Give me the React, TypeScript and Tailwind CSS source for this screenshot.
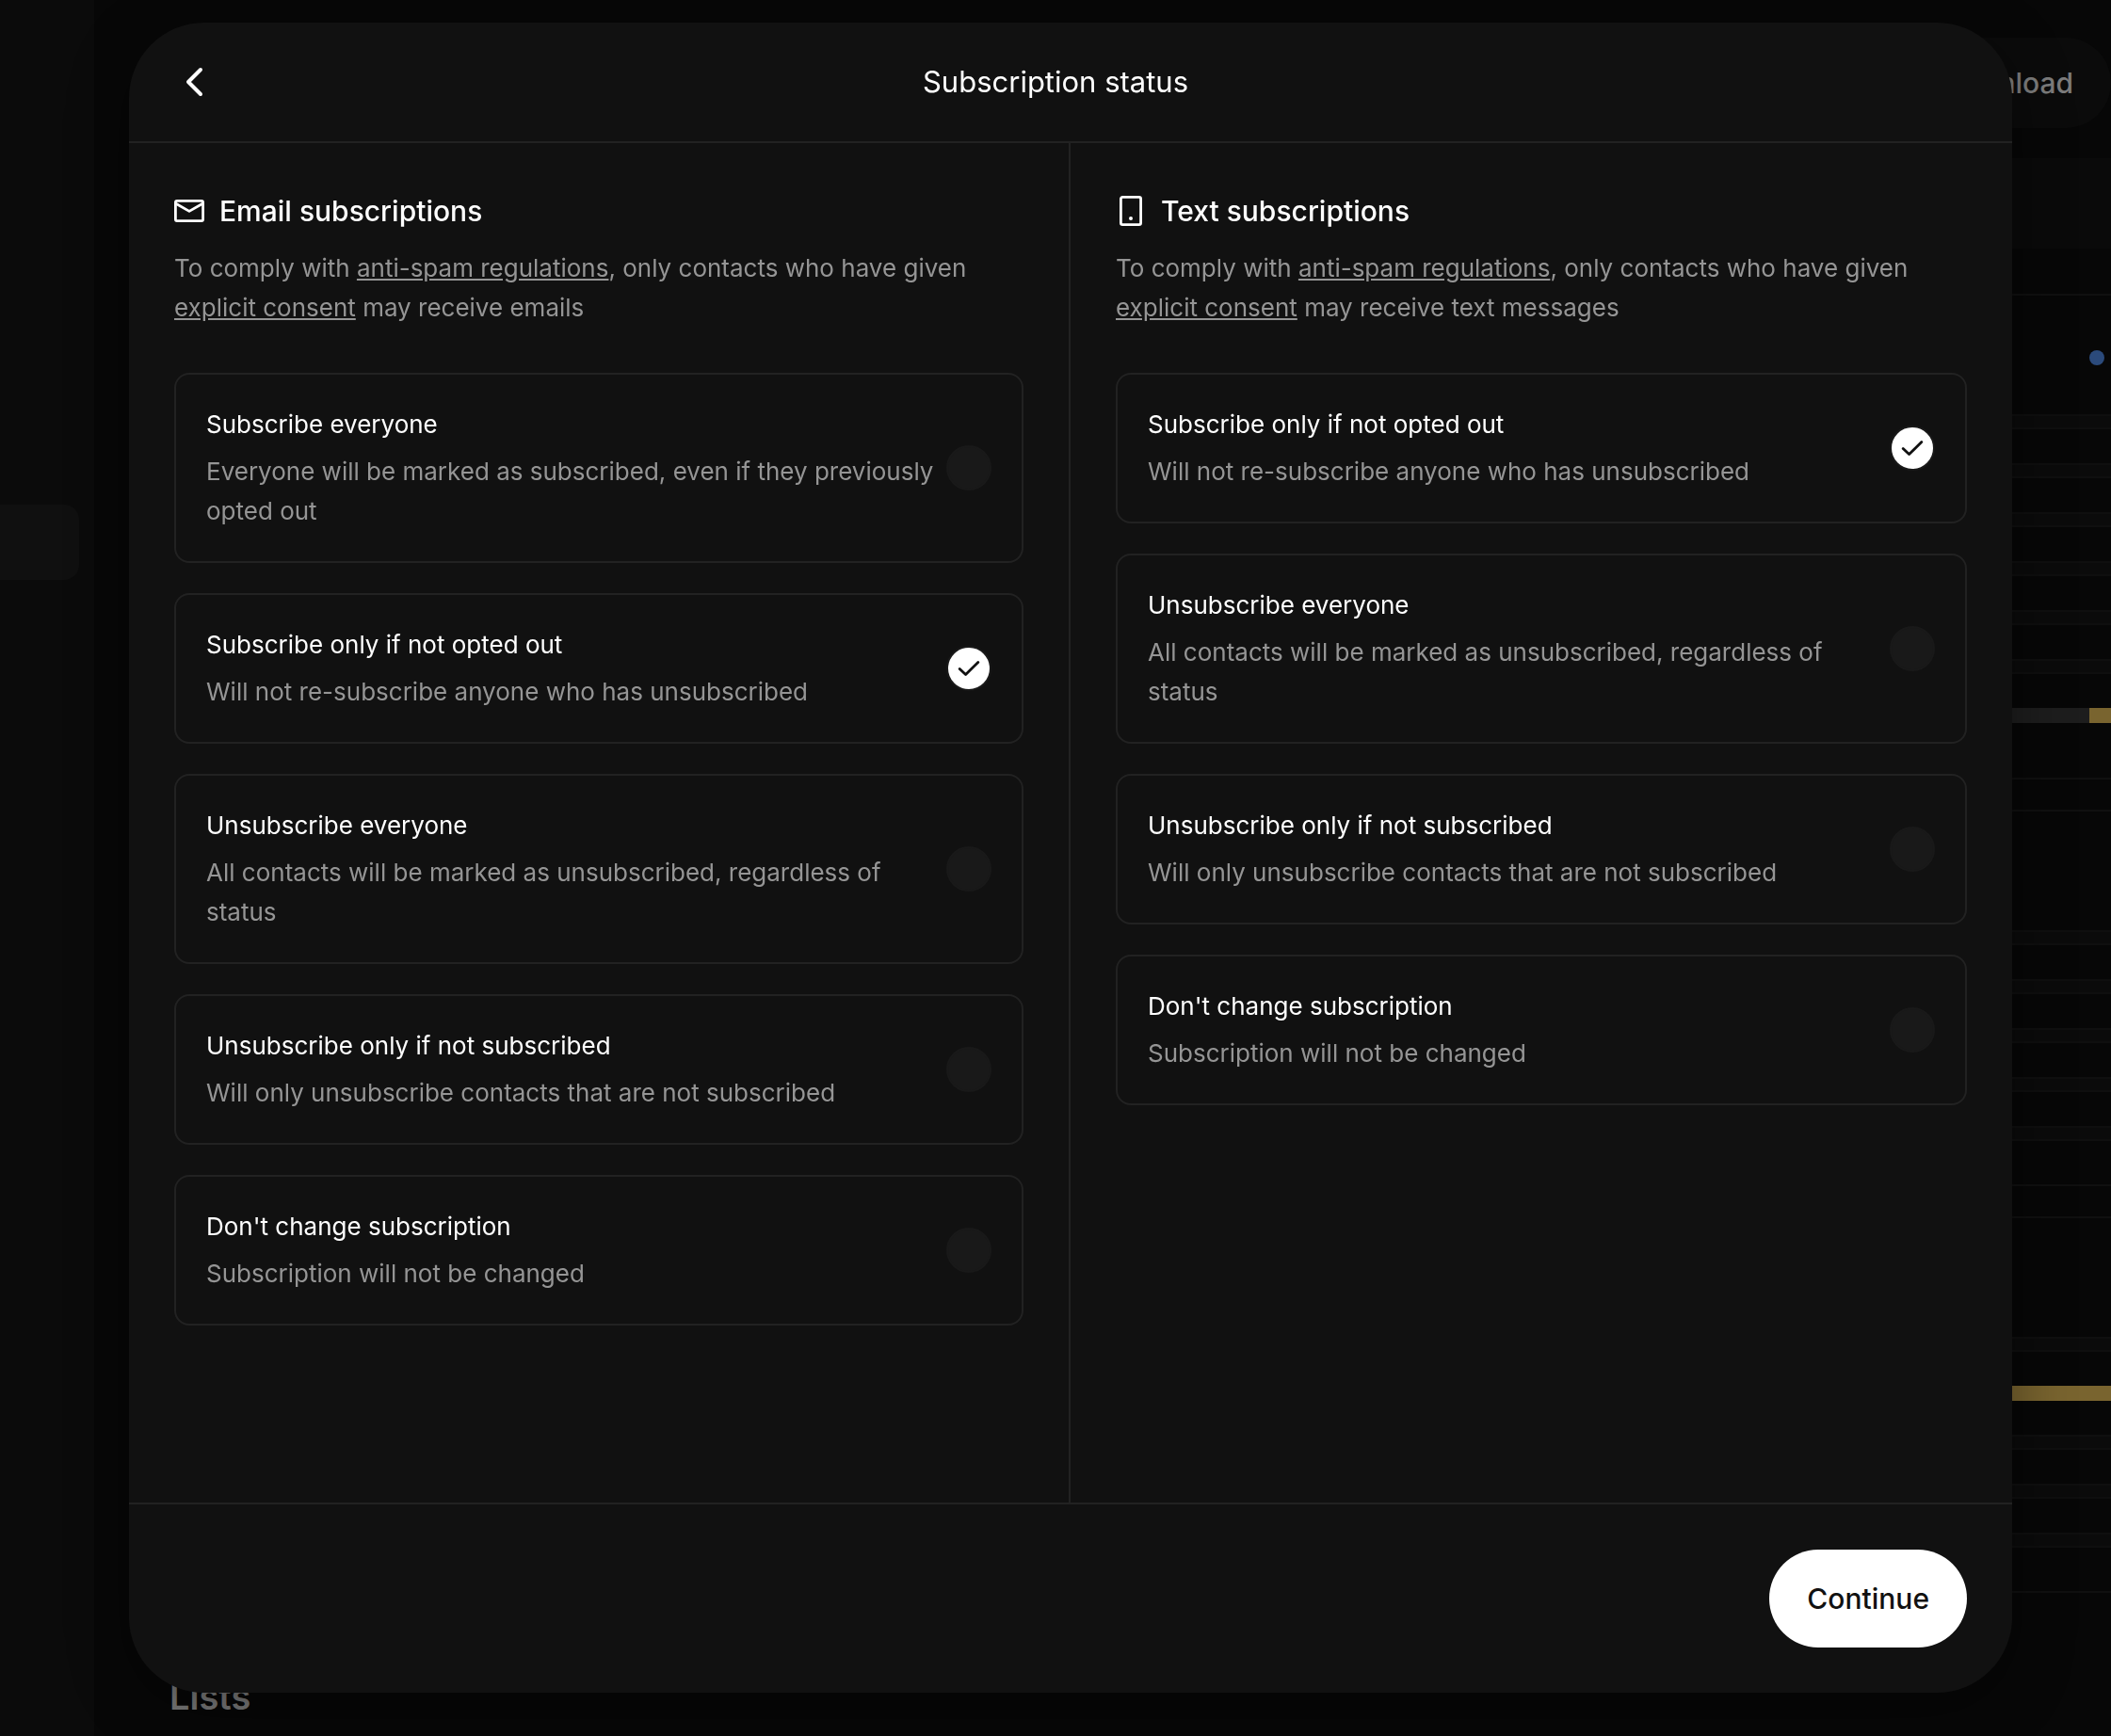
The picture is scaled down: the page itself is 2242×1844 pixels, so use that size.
import React from 'react';

interface Option {
    id: string;
    title: string;
    description: string;
}

interface Meter {
    bars: ('empty' | 'split' | 'gold')[];
    className: string;
}

const everyone: Option = {
    id: 'subscribe-all',
    title: 'Subscribe everyone',
    description: 'Everyone will be marked as subscribed, even if they previously opted out',
};

const sharedOptions: Option[] = [
    {
        id: 'subscribe-safe',
        title: 'Subscribe only if not opted out',
        description: 'Will not re-subscribe anyone who has unsubscribed',
    },
    {
        id: 'unsubscribe-all',
        title: 'Unsubscribe everyone',
        description: 'All contacts will be marked as unsubscribed, regardless of status',
    },
    {
        id: 'unsubscribe-safe',
        title: 'Unsubscribe only if not subscribed',
        description: 'Will only unsubscribe contacts that are not subscribed',
    },
    {
        id: 'keep',
        title: "Don't change subscription",
        description: 'Subscription will not be changed',
    },
];

const meters: Meter[] = [
    { bars: ['empty', 'empty', 'empty', 'empty', 'empty', 'empty', 'split'], className: 'pb-[58px]' },
    { bars: ['empty', 'empty', 'empty', 'empty', 'empty'], className: 'pb-[46px]' },
    { bars: ['empty', 'gold', 'empty', 'empty', 'empty'], className: 'pb-[46px]' },
];

const MailIcon = () => (
    <svg className="size-8 shrink-0" viewBox="0 0 32 32" fill="none" stroke="currentColor" strokeWidth="2.8" strokeLinejoin="round" aria-hidden="true">
        <rect x="1.4" y="5.4" width="29.2" height="21.2" rx="1.6" />
        <path d="M1.8 8.2 16 16.4l14.2-8.2" />
    </svg>
);

const PhoneIcon = () => (
    <svg className="size-8 shrink-0" viewBox="0 0 32 32" fill="none" stroke="currentColor" strokeWidth="2.8" aria-hidden="true">
        <rect x="5.4" y="1.4" width="21.2" height="29.2" rx="1.8" />
        <circle cx="16" cy="24" r="2" fill="currentColor" stroke="none" />
    </svg>
);

const OptionCard = ({ name, option, checked, onSelect }: {
    name: string;
    option: Option;
    checked: boolean;
    onSelect: () => void;
}) => (
    <label className="flex items-center gap-3 rounded-2xl border-2 border-[#222222] p-8 cursor-pointer">
        <span className="flex flex-1 flex-col gap-2">
            <span className="text-white">{option.title}</span>
            <span className="text-[#959595]">{option.description}</span>
        </span>
        <span className="relative grid size-12 shrink-0 place-items-center">
            <input
                type="radio"
                name={name}
                checked={checked}
                onChange={onSelect}
                className="size-12 appearance-none rounded-full border-2 border-[#191919] bg-[#191919] checked:bg-white"
            />
            {checked && (
                <svg className="pointer-events-none absolute size-6" viewBox="0 0 24 24" fill="none" stroke="#111111" strokeWidth="2.8" strokeLinecap="round" strokeLinejoin="round" aria-hidden="true">
                    <path d="M2.2 12.4 8.6 18.6 21.8 5.4" />
                </svg>
            )}
        </span>
    </label>
);

const SubscriptionColumn = ({ name, heading, icon, receives, options }: {
    name: string;
    heading: string;
    icon: React.ReactNode;
    receives: string;
    options: Option[];
}) => {
    const [selected, setSelected] = React.useState('subscribe-safe');

    return (
        <section className="flex flex-col gap-12 border-[#222222] p-12 first:border-r-2">
            <div className="space-y-4">
                <h2 className="flex items-center gap-4 text-[30px] leading-[48px] font-medium text-white">
                    {icon}
                    {heading}
                </h2>
                <p className="text-[#959595]">
                    To comply with <a href="#anti-spam" className="underline">anti-spam regulations</a>, only contacts who have given{' '}
                    <a href="#consent" className="underline">explicit consent</a> may receive {receives}
                </p>
            </div>
            <div className="flex flex-col gap-8" role="radiogroup" aria-label={heading}>
                {options.map((option) => (
                    <OptionCard
                        key={option.id}
                        name={name}
                        option={option}
                        checked={selected === option.id}
                        onSelect={() => setSelected(option.id)}
                    />
                ))}
            </div>
        </section>
    );
};

const MeterBar = ({ kind }: { kind: Meter['bars'][number] }) => {
    if (kind === 'gold') return <div className="h-4 bg-[#79642f]" />;
    if (kind === 'split') {
        return (
            <div className="flex h-4">
                <div className="flex-1 bg-[#1d1d1d]" />
                <div className="w-[23px] bg-[#79642f]" />
            </div>
        );
    }
    return <div className="h-4 border-y-2 border-[#0f0f0f] bg-[#0b0b0b]" />;
};

const Backdrop = () => (
    <div className="flex h-screen overflow-hidden">
        <aside className="w-[100px] shrink-0 bg-[#0b0b0b] pt-[536px]">
            <div className="mr-4 h-20 rounded-r-2xl bg-[#101010]" />
        </aside>
        <main className="flex-1 pt-10">
            <div className="flex justify-end">
                <button type="button" className="h-24 rounded-full bg-[#0b0b0b] px-10 text-[30px] font-medium text-[#7c7c7c]">
                    Download
                </button>
            </div>
            <div className="mt-8 mb-12 ml-20 h-24 bg-[#0a0a0a]" />
            <div className="flex flex-col gap-8 pl-20">
                {meters.map((meter, i) => (
                    <div key={i} className={`border-y-2 border-[#101010] ${meter.className}`}>
                        <div className="flex h-[126px] items-start justify-end pt-[58px] pr-[7px]">
                            {i === 0 && <span className="size-4 rounded-full bg-[#2b4a7b]" />}
                        </div>
                        <div className="flex flex-col gap-9">
                            {meter.bars.map((kind, j) => (
                                <MeterBar key={j} kind={kind} />
                            ))}
                        </div>
                    </div>
                ))}
            </div>
            <h2 className="mt-[86px] pl-20 text-[38px] leading-[48px] font-semibold text-[#7c7c7c]">Lists</h2>
        </main>
    </div>
);

const App = () => (
    <div className="min-h-screen bg-[#070707] font-['Inter',sans-serif] text-[26px] leading-[42px]">
        <Backdrop />
        <div className="fixed inset-0 flex pt-6 pr-[105px] pb-[46px] pl-[137px]">
            <div
                role="dialog"
                aria-labelledby="dialog-title"
                className="flex flex-1 flex-col overflow-hidden rounded-[80px] bg-[#111111] shadow-[0_16px_64px_rgba(0,0,0,0.4)]"
            >
                <header className="flex h-32 shrink-0 items-center border-b-2 border-[#222222] px-12">
                    <button type="button" aria-label="Back" className="grid h-12 w-10 place-items-center text-white">
                        <svg className="size-10" viewBox="0 0 40 40" fill="none" stroke="currentColor" strokeWidth="4" strokeLinecap="round" strokeLinejoin="round" aria-hidden="true">
                            <path d="M28 7 15 20l13 13" />
                        </svg>
                    </button>
                    <h1 id="dialog-title" className="flex-1 pr-[72px] text-center text-[31px] text-white">
                        Subscription status
                    </h1>
                </header>
                <div className="grid flex-1 grid-cols-2 overflow-hidden">
                    <SubscriptionColumn
                        name="email"
                        heading="Email subscriptions"
                        icon={<MailIcon />}
                        receives="emails"
                        options={[everyone, ...sharedOptions]}
                    />
                    <SubscriptionColumn
                        name="text"
                        heading="Text subscriptions"
                        icon={<PhoneIcon />}
                        receives="text messages"
                        options={sharedOptions}
                    />
                </div>
                <footer className="flex justify-end border-t-2 border-[#222222] p-12">
                    <button type="button" className="h-[104px] rounded-full bg-white px-10 text-[30px] font-medium text-[#111111]">
                        Continue
                    </button>
                </footer>
            </div>
        </div>
    </div>
);

export default App;
